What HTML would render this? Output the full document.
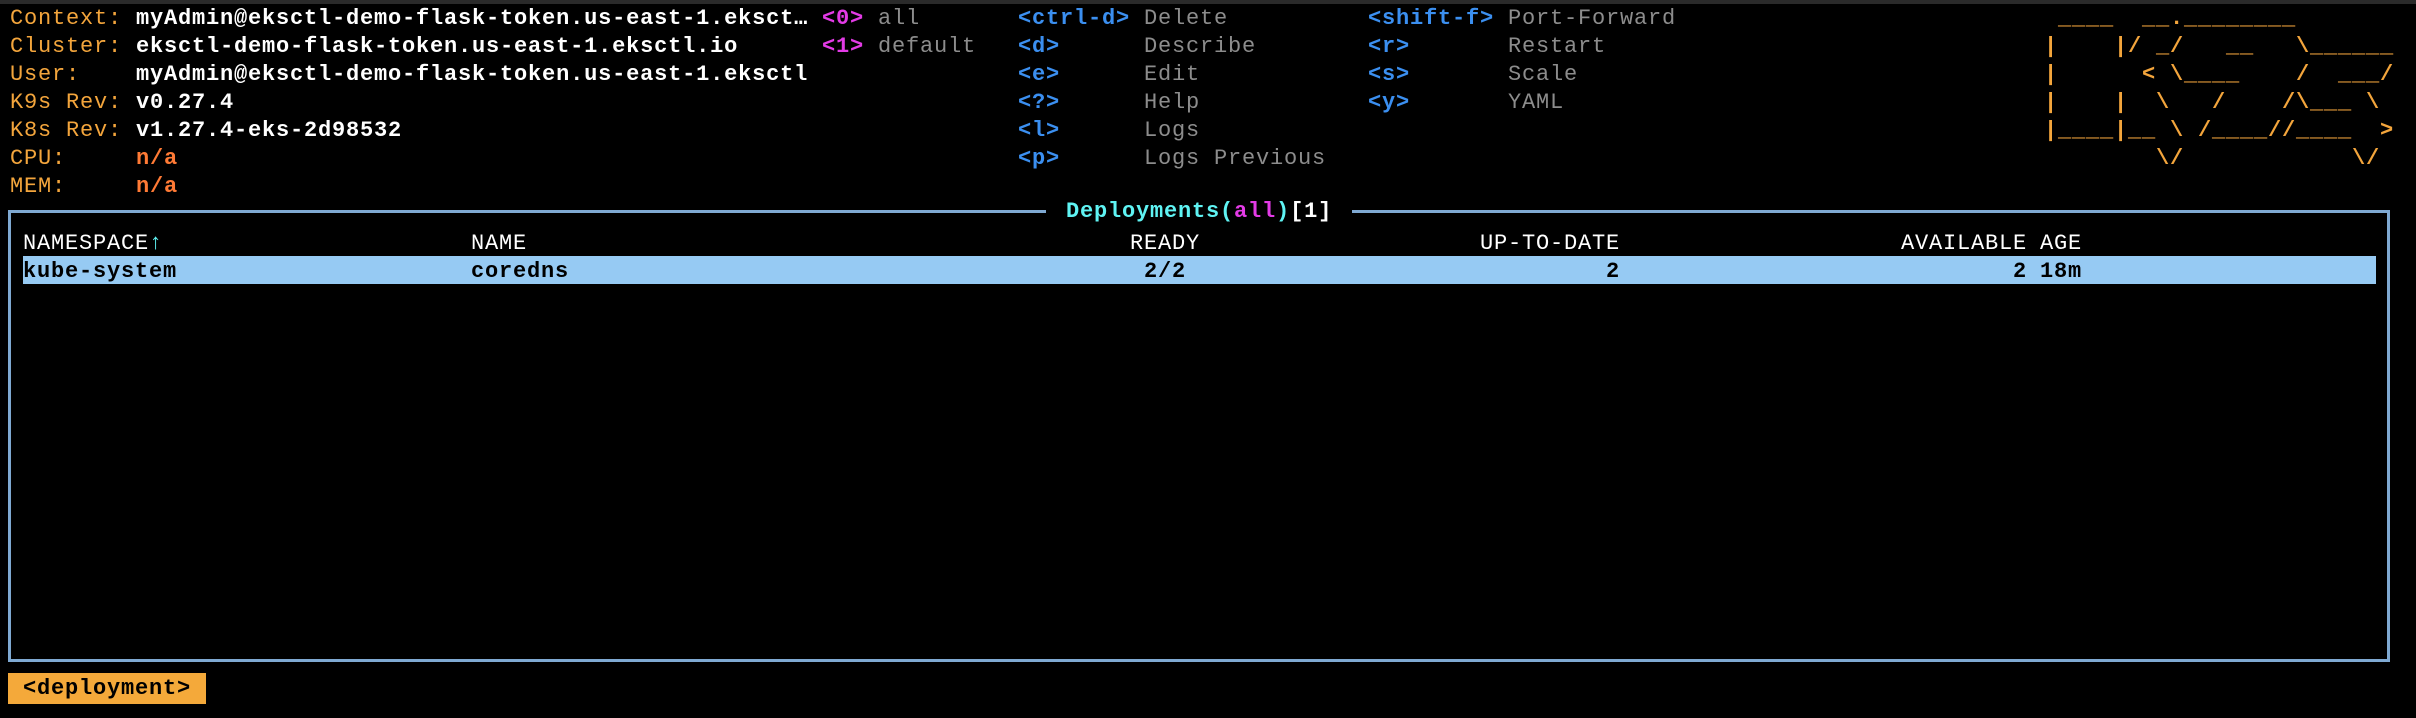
<!DOCTYPE html>
<html><head><meta charset="utf-8">
<style>
html,body{margin:0;padding:0;background:#000;width:2416px;height:718px;overflow:hidden}
body{position:relative;font-family:"Liberation Mono","DejaVu Sans Mono",monospace;font-size:22px;letter-spacing:0.8px;}
.t{position:absolute;white-space:pre;line-height:28px;height:28px;margin-top:2px}
.o{color:#f3a53c}.w{color:#fff;font-weight:bold}.r{color:#ff7a35;font-weight:bold}
.m{color:#e33be6;font-weight:bold}.g{color:#8c8c8c}.b{color:#3b8ff0;font-weight:bold}
.h{color:#fff}
#bar{position:absolute;left:0;top:0;width:2416px;height:4px;background:#2a2a2a}
#frame{position:absolute;left:8px;top:210px;width:2376px;height:446px;border:3px solid #7fa9d2;box-sizing:content-box}
#title{position:absolute;left:1046px;top:198px;background:#000;padding:0 6px;line-height:28px;white-space:pre;font-weight:bold;color:#5ff3f3}
#sel{position:absolute;left:23px;top:256px;width:2353px;height:28px;background:#96caf3}
#tag{position:absolute;left:8px;top:673px;width:198px;height:31px;background:#f4a93a;color:#000;font-weight:bold;line-height:31px;text-align:center;white-space:pre}
</style></head><body>
<div id="bar"></div>
<div class="t o" style="left:10px;top:3px">Context:</div>
<div class="t w" style="left:136px;top:3px">myAdmin@eksctl-demo-flask-token.us-east-1.eksct…</div>
<div class="t o" style="left:10px;top:31px">Cluster:</div>
<div class="t w" style="left:136px;top:31px">eksctl-demo-flask-token.us-east-1.eksctl.io</div>
<div class="t o" style="left:10px;top:59px">User:</div>
<div class="t w" style="left:136px;top:59px">myAdmin@eksctl-demo-flask-token.us-east-1.eksctl</div>
<div class="t o" style="left:10px;top:87px">K9s Rev:</div>
<div class="t w" style="left:136px;top:87px">v0.27.4</div>
<div class="t o" style="left:10px;top:115px">K8s Rev:</div>
<div class="t w" style="left:136px;top:115px">v1.27.4-eks-2d98532</div>
<div class="t o" style="left:10px;top:143px">CPU:</div>
<div class="t r" style="left:136px;top:143px">n/a</div>
<div class="t o" style="left:10px;top:171px">MEM:</div>
<div class="t r" style="left:136px;top:171px">n/a</div>

<div class="t m" style="left:822px;top:3px">&lt;0&gt;</div>
<div class="t g" style="left:878px;top:3px">all</div>
<div class="t m" style="left:822px;top:31px">&lt;1&gt;</div>
<div class="t g" style="left:878px;top:31px">default</div>

<div class="t b" style="left:1018px;top:3px">&lt;ctrl-d&gt;</div><div class="t g" style="left:1144px;top:3px">Delete</div>
<div class="t b" style="left:1018px;top:31px">&lt;d&gt;</div><div class="t g" style="left:1144px;top:31px">Describe</div>
<div class="t b" style="left:1018px;top:59px">&lt;e&gt;</div><div class="t g" style="left:1144px;top:59px">Edit</div>
<div class="t b" style="left:1018px;top:87px">&lt;?&gt;</div><div class="t g" style="left:1144px;top:87px">Help</div>
<div class="t b" style="left:1018px;top:115px">&lt;l&gt;</div><div class="t g" style="left:1144px;top:115px">Logs</div>
<div class="t b" style="left:1018px;top:143px">&lt;p&gt;</div><div class="t g" style="left:1144px;top:143px">Logs Previous</div>

<div class="t b" style="left:1368px;top:3px">&lt;shift-f&gt;</div><div class="t g" style="left:1508px;top:3px">Port-Forward</div>
<div class="t b" style="left:1368px;top:31px">&lt;r&gt;</div><div class="t g" style="left:1508px;top:31px">Restart</div>
<div class="t b" style="left:1368px;top:59px">&lt;s&gt;</div><div class="t g" style="left:1508px;top:59px">Scale</div>
<div class="t b" style="left:1368px;top:87px">&lt;y&gt;</div><div class="t g" style="left:1508px;top:87px">YAML</div>

<div class="t o" style="left:2044px;top:3px;height:auto;font-weight:bold"> ____  __.________
|    |/ _/   __   \______
|      &lt; \____    /  ___/
|    |  \   /    /\___ \
|____|__ \ /____//____  &gt;
        \/            \/</div>

<div id="frame"></div>
<div id="title"> Deployments(<span style="color:#e33be6">all</span>)<span style="color:#fff">[1]</span> </div>
<div class="t h" style="left:23px;top:228px">NAMESPACE<span style="color:#5ff3f3">↑</span></div>
<div class="t h" style="left:471px;top:228px">NAME</div>
<div class="t h" style="left:1130px;top:228px">READY</div>
<div class="t h" style="left:1480px;top:228px">UP-TO-DATE</div>
<div class="t h" style="left:1901px;top:228px">AVAILABLE</div>
<div class="t h" style="left:2040px;top:228px">AGE</div>
<div id="sel"></div>
<div class="t" style="left:23px;top:256px;font-weight:bold;color:#000">kube-system</div>
<div class="t" style="left:471px;top:256px;font-weight:bold;color:#000">coredns</div>
<div class="t" style="left:1144px;top:256px;font-weight:bold;color:#000">2/2</div>
<div class="t" style="left:1606px;top:256px;font-weight:bold;color:#000">2</div>
<div class="t" style="left:2013px;top:256px;font-weight:bold;color:#000">2</div>
<div class="t" style="left:2040px;top:256px;font-weight:bold;color:#000">18m</div>
<div id="tag">&lt;deployment&gt;</div>
</body></html>
